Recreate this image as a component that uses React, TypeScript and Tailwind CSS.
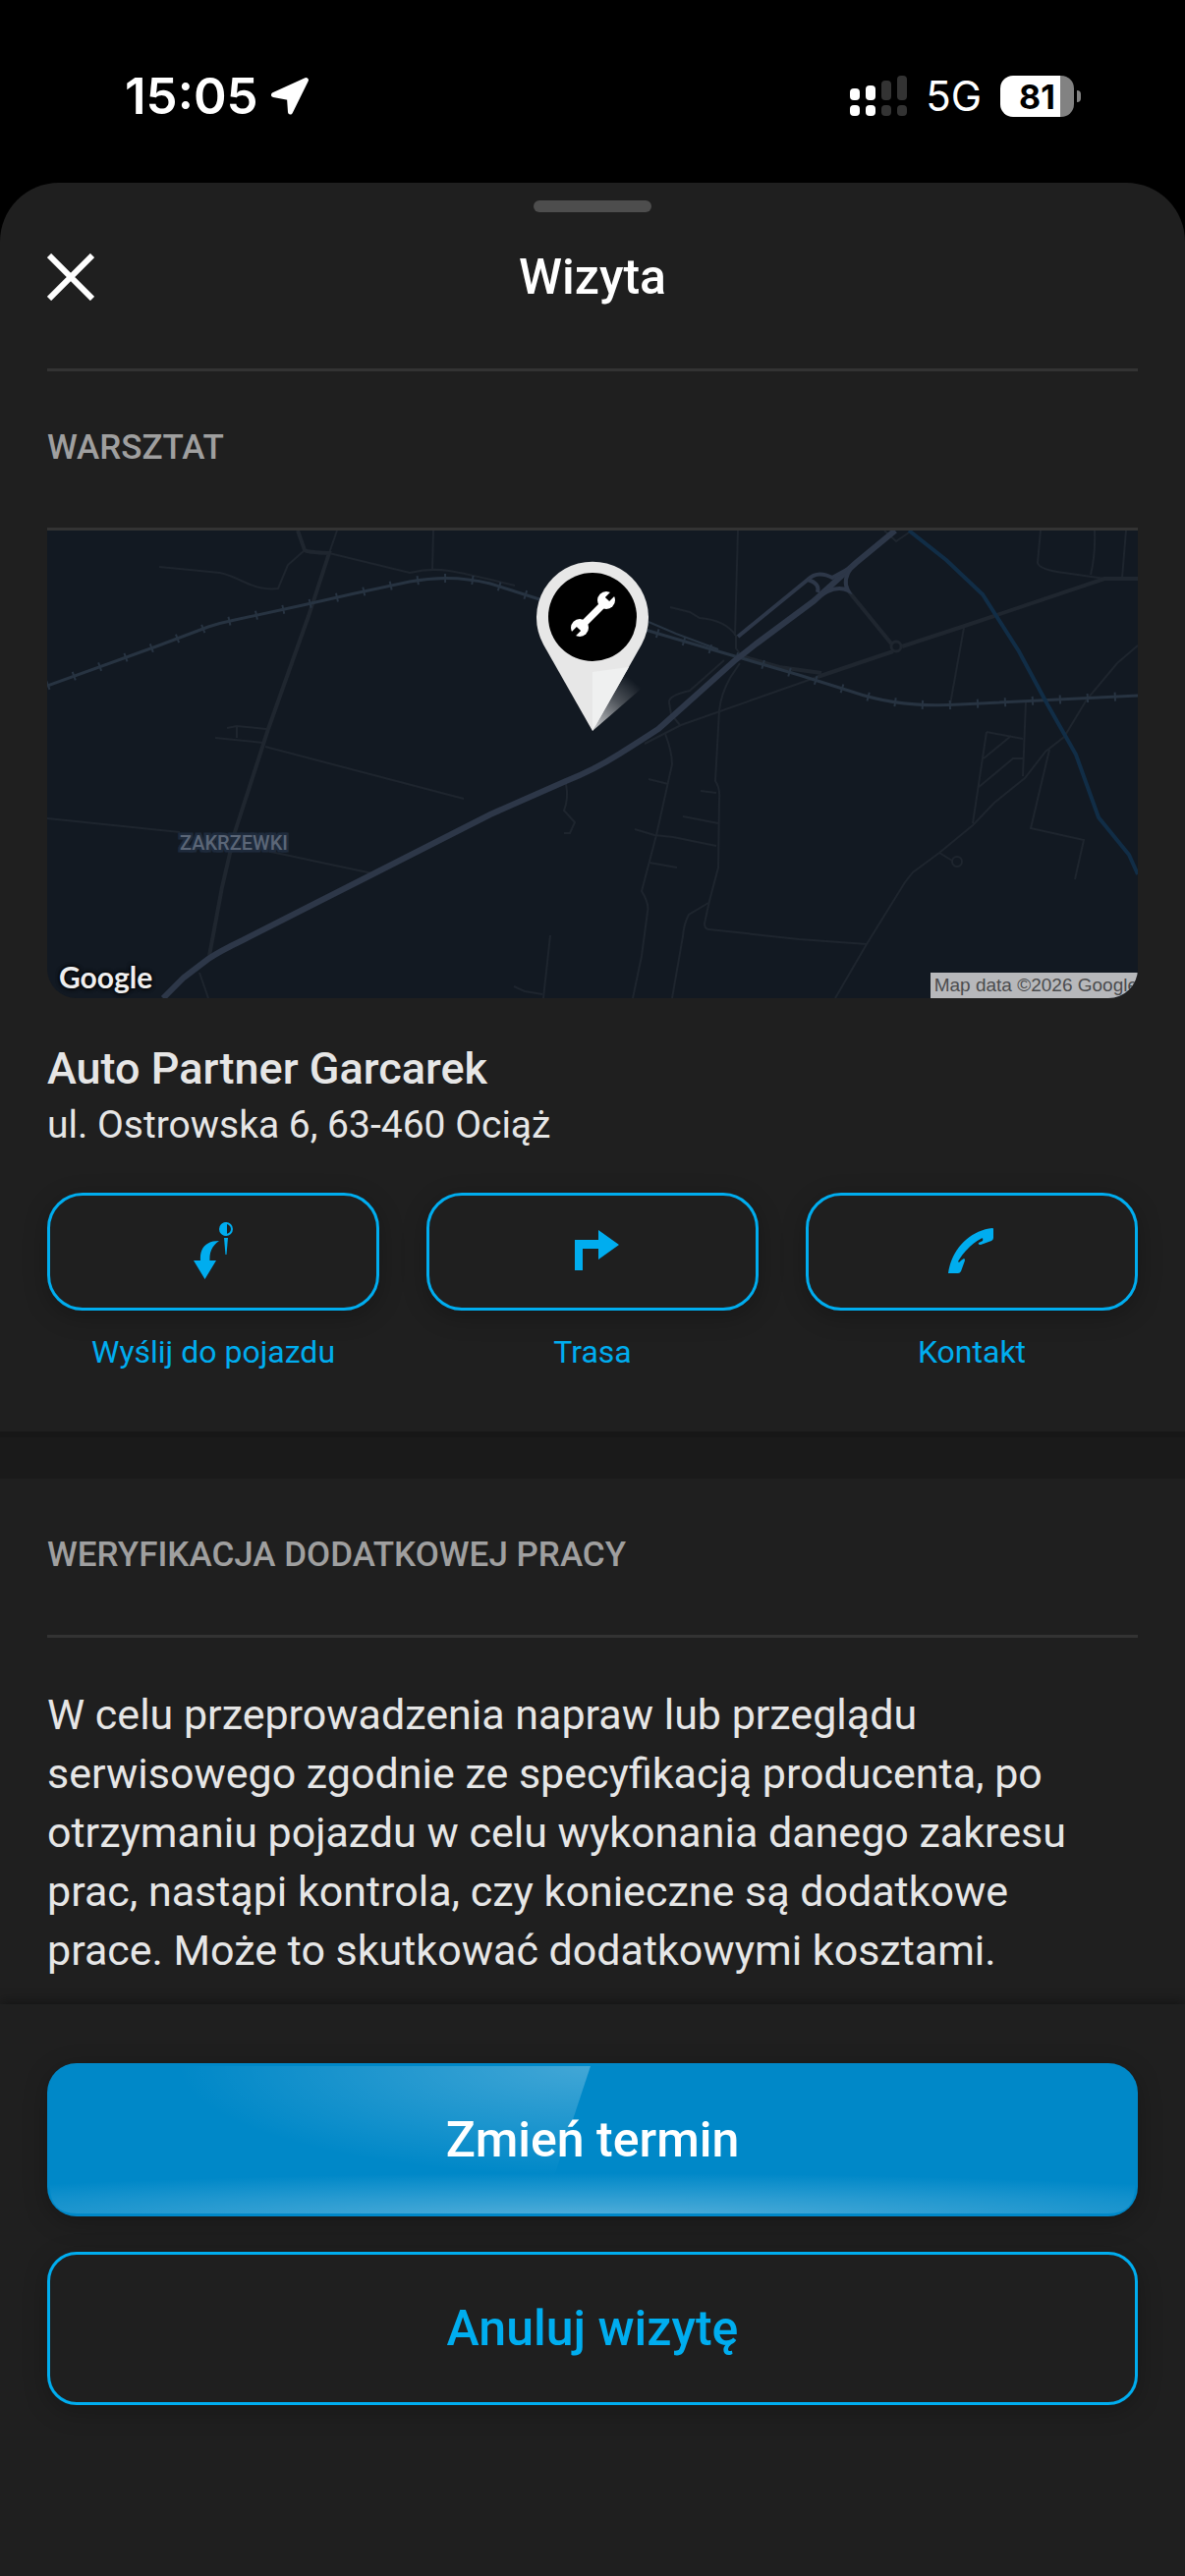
import type { ReactNode } from "react";

const ROADS = [
  "M295 0 287 23 369 43Q390 38 409 41T476 56",
  "M393 0 392 40",
  "M114 37 176 43Q185 45 202 53T235 59L245 35 262 20",
  "M183 201 193 199 223 202M193 199V211M171 211 220 216",
  "M222 220 424 273",
  "M0 293 135 307M223 326 331 349",
  "M528 258Q531 272 526 285L537 297 532 308H526",
  "M512 412 505 476M475 464 486 469 504 472",
  "M155 450 164 476",
  "M703 0 700 107",
  "M634 78 654 83 664 89Q690 91 701 107V120L707 128",
  "M689 132 654 163Q632 168 633 175L635 187 644 198",
  "M608 217 645 198 784 149",
  "M705 135 695 150Q686 166 684 183L680 255Q685 262 684 273L683 343 674 377 669 400Q669 406 674 406L765 416 834 421",
  "M629 207Q636 225 636 238L620 310 605 367Q613 380 611 388L605 433 596 476",
  "M673 379 653 391Q648 400 647 413L636 476",
  "M612 253 632 258M665 265 681 267M647 291 683 298M598 304 618 310 637 312 681 321M613 338 641 343",
  "M933 99 919 177",
  "M1011 0 1008 33Q1010 40 1035 43L1076 49M1066 0Q1067 24 1062 45M1098 0 1094 48",
  "M1110 117 1089 135 1058 172 1035 210 1016 225 995 252 964 277 942 300 908 328 881 348 873 358 834 421 802 476",
  "M956 205 942 298M956 205 993 212M981 209 953 232M993 232H983L947 262M996 175 993 250",
  "M1020 223 1001 303 1055 315 1046 355",
  "M908 328 921 336",
  "M852 0 864 11 877 2",
];

const WIDE_ROADS = [
  "M255 0 262 20Q264 22 287 23L266 87 225 202 191 307 178 363 165 433",
  "M784 149 861 123M870 118 931 98 1076 49H1110",
  "M707 128 745 139 788 145",
  "M815 61 859 115",
];

const RAILWAY =
  "M0 158 111 118 164 98Q176 94 191 91L260 76 313 64 369 52Q411 44 451 54L501 70 612 102 683 123 765 147 819 164Q868 181 929 177L1110 168";

function LocationArrow() {
  return (
    <svg viewBox="0 0 40 40" className="size-10" fill="#fff" stroke="#fff" strokeWidth="5" strokeLinejoin="round">
      <path d="M36.500 3.500 20.500 36 19.500 21.500 3.500 18.500Z" />
    </svg>
  );
}

function SignalIcon() {
  return (
    <svg viewBox="0 0 58 42" className="h-[42px] w-[58px]">
      <g fill="#fff">
        <rect x="0" y="13" width="10" height="12" rx="4" />
        <rect x="16" y="10" width="10" height="15" rx="4" />
        <rect x="0" y="30" width="10" height="11" rx="4" />
        <rect x="16" y="30" width="10" height="11" rx="4" />
      </g>
      <g fill="#333">
        <rect x="32" y="5" width="10" height="20" rx="4" />
        <rect x="48" y="0" width="10" height="25" rx="4" />
        <rect x="32" y="30" width="10" height="11" rx="4" />
        <rect x="48" y="30" width="10" height="11" rx="4" />
      </g>
    </svg>
  );
}

function StatusBar() {
  return (
    <div className="flex h-[186px] items-start justify-between pt-[68px] pr-[106px] pl-[127px] font-[Inter,sans-serif] text-white">
      <div className="flex h-[60px] items-center gap-3">
        <span className="text-[51px] leading-[60px] font-semibold">15:05</span>
        <LocationArrow />
      </div>
      <div className="flex h-[60px] items-center gap-[19px]">
        <SignalIcon />
        <span className="text-[42px] leading-[60px]">5G</span>
        <div className="flex items-center gap-[3px]">
          <div className="flex h-[42px] w-[75px] items-center justify-center rounded-[13px] bg-linear-to-r from-white from-81% to-[#828282] to-81% text-[34px] font-bold text-black">
            81
          </div>
          <div className="h-3 w-1 rounded-r-full bg-[#828282]" />
        </div>
      </div>
    </div>
  );
}

function MapPin() {
  return (
    <g>
      <defs>
        <radialGradient id="pin-glow" gradientUnits="userSpaceOnUse" cx="555" cy="204" r="66">
          <stop offset="0.1" stopColor="#fff" stopOpacity="0.7" />
          <stop offset="0.6" stopColor="#fff" stopOpacity="0.25" />
          <stop offset="1" stopColor="#fff" stopOpacity="0" />
        </radialGradient>
      </defs>
      <path d="M555 204 586 140 608 158Z" fill="url(#pin-glow)" />
      <path d="M505 116A57 57 0 1 1 605 116L555 204Z" fill="#e7e7e7" />
      <path d="M555 144 592 139 555 204Z" fill="#eff0f0" />
      <circle cx="555" cy="88" r="45" fill="#000" />
      <path d="M544 97 567 74" stroke="#fff" strokeWidth="7" />
      <circle cx="569" cy="71" r="9" fill="#fff" />
      <circle cx="542" cy="99" r="9" fill="#fff" />
      <path d="M570 70 580 60M541 100 531 110" stroke="#000" strokeWidth="6" />
    </g>
  );
}

function WorkshopMap() {
  return (
    <div className="relative overflow-hidden rounded-b-[30px] bg-[#121922]">
      <svg viewBox="0 0 1110 476" className="block h-auto w-full" fill="none" role="img" aria-label="Mapa">
        <g stroke="#1e252e" strokeWidth="2">
          {ROADS.map((d) => (
            <path key={d} d={d} />
          ))}
          <circle cx="926" cy="337" r="5" />
        </g>
        <g stroke="#1f262f" strokeWidth="4">
          {WIDE_ROADS.map((d) => (
            <path key={d} d={d} />
          ))}
          <circle cx="864" cy="118" r="5" strokeWidth="3" />
        </g>
        <path d={RAILWAY} stroke="#273341" strokeWidth="3" />
        <path d={RAILWAY} stroke="#273341" strokeWidth="9" strokeDasharray="2 26" />
        <path d="M612 93 640 105 683 121" stroke="#273341" strokeWidth="2" />
        <path
          d="M877 0 915 30 952 65 966 87 989 123 1018 177 1047 228 1070 292 1101 330 1110 350"
          stroke="#112d46"
          strokeWidth="4"
        />
        <g stroke="#2d3748">
          <path
            d="M118 476 139 455 164 436Q176 428 199 417L331 350 451 289 528 255Q556 244 583 227T622 202L699 133 722 115 780 72 823 33 863 0"
            strokeWidth="6"
          />
          <path d="M703 108 774 50Q784 40 799 48L819 37" strokeWidth="4" />
          <path d="M774 50Q787 54 784 63M780 72Q800 54 815 61Q809 50 819 37" strokeWidth="4" />
        </g>
        <text
          x="190"
          y="325"
          textAnchor="middle"
          className="fill-[#5b6677] font-[Roboto,sans-serif] text-[20px] font-medium"
          stroke="#1e2a3b"
          strokeWidth="5"
          paintOrder="stroke"
        >
          ZAKRZEWKI
        </text>
        <MapPin />
      </svg>
      <span className="absolute bottom-0 left-3 font-[Lato,sans-serif] text-[30px] leading-[44px] font-bold text-[#eee] [text-shadow:0_0_4px_#000,0_0_4px_#000]">
        Google
      </span>
      <span className="absolute right-0 bottom-0 bg-[#b7b8bb] pl-1 font-['Liberation_Sans',sans-serif] text-[19px] leading-[26px] text-[#4b4c4e]">
        Map data ©2026 Google
      </span>
    </div>
  );
}

function SendToCarIcon() {
  return (
    <svg viewBox="-3 0 80 90" className="h-[90px] w-20" fill="#00adef">
      <circle cx="50" cy="22" r="6" fill="none" stroke="#00adef" strokeWidth="2" />
      <path d="M51 15A7 7 0 0 0 51 29Z" />
      <path d="M48 31H52L50.500 48H49.500Z" />
      <path d="M43 34C29 34 23 42 24 54H17L28.500 73 40 54H33.500C33 45 36 39 43 34Z" />
    </svg>
  );
}

function RouteIcon() {
  return (
    <svg viewBox="0 0 80 90" className="h-[90px] w-20" fill="#00adef">
      <path d="M22 64V33H46V23L67 38 46 53V42H30V64Z" />
    </svg>
  );
}

function PhoneIcon() {
  return (
    <svg viewBox="0 0 80 90" className="h-[90px] w-20" fill="#00adef">
      <path d="M62 22V31Q62 33 60 34L49 38Q46 38 47 36L51 34Q52 30 49 32C41 36 31 46 26 55Q27 57 29 54L32 52Q33 52 33 54L29 65Q28 67 26 67H16C18 53 24 42 34 33C42 26 51 22 61 21Q62 21 62 22Z" />
    </svg>
  );
}

function Action({ label, icon }: { label: string; icon: ReactNode }) {
  return (
    <button className="flex flex-1 flex-col gap-5 text-[#00adef]">
      <span className="flex h-[120px] w-full items-center justify-center rounded-[36px] border-3 border-[#00adef] shadow-[0_6px_24px_rgba(0,0,0,0.25)]">
        {icon}
      </span>
      <span className="w-full text-center text-[32px] leading-[44px]">{label}</span>
    </button>
  );
}

function SectionHeader({ children }: { children: ReactNode }) {
  return (
    <h2 className="mx-12 border-b-3 border-[#333] pt-14 pb-[59px] text-[35px] leading-[44px] font-medium text-[#9f9f9f]">
      {children}
    </h2>
  );
}

export default function App() {
  return (
    <div className="flex min-h-screen flex-col bg-black font-[Roboto,sans-serif]">
      <StatusBar />
      <main className="flex flex-1 flex-col rounded-t-[60px] bg-[#1f1f1f] pt-[18px] text-[#e6e6e6]">
        <div className="mx-auto h-3 w-[120px] rounded-full bg-[#4d4d4d]" />
        <header className="mx-12 grid grid-cols-[1fr_auto_1fr] items-center border-b-3 border-[#333] pt-9 pb-[63px] text-white">
          <button aria-label="Zamknij">
            <svg viewBox="0 0 48 48" className="size-12" stroke="#fff" strokeWidth="6">
              <path d="M2 2 46 46M46 2 2 46" />
            </svg>
          </button>
          <h1 className="text-[50px] leading-[60px] font-medium">Wizyta</h1>
        </header>

        <section className="pb-[59px]">
          <SectionHeader>WARSZTAT</SectionHeader>
          <div className="px-12">
            <WorkshopMap />
            <h3 className="pt-10 text-[45px] leading-[64px] font-medium">Auto Partner Garcarek</h3>
            <p className="text-[39px] leading-[50px]">ul. Ostrowska 6, 63-460 Ociąż</p>
            <div className="flex gap-12 pt-11">
              <Action label="Wyślij do pojazdu" icon={<SendToCarIcon />} />
              <Action label="Trasa" icon={<RouteIcon />} />
              <Action label="Kontakt" icon={<PhoneIcon />} />
            </div>
          </div>
        </section>

        <div className="h-12 border-t-6 border-[#171717] bg-[#1a1a1a]" />

        <section>
          <SectionHeader>WERYFIKACJA DODATKOWEJ PRACY</SectionHeader>
          <p className="pt-12 pr-20 pb-[25px] pl-12 text-[43px] leading-[60px]">
            W celu przeprowadzenia napraw lub przeglądu serwisowego zgodnie ze specyfikacją producenta, po otrzymaniu
            pojazdu w celu wykonania danego zakresu prac, nastąpi kontrola, czy konieczne są dodatkowe prace. Może to
            skutkować dodatkowymi kosztami.
          </p>
        </section>

        <footer className="flex flex-1 flex-col gap-9 px-12 pt-[60px] pb-20 shadow-[0_-2px_12px_rgba(0,0,0,0.4)]">
          <button className="relative h-[156px] overflow-hidden rounded-[30px] bg-[#0088c8] text-[50px] font-medium text-white shadow-[0_6px_24px_rgba(0,0,0,0.25)]">
            <svg viewBox="0 0 1110 156" preserveAspectRatio="none" className="absolute inset-0 size-full">
              <defs>
                <radialGradient
                  id="sheen"
                  gradientUnits="userSpaceOnUse"
                  cx="0"
                  cy="0"
                  r="1"
                  gradientTransform="translate(553 3) scale(420 112)"
                >
                  <stop stopColor="#fff" stopOpacity="0.26" />
                  <stop offset="1" stopColor="#fff" stopOpacity="0" />
                </radialGradient>
                <radialGradient
                  id="glow"
                  gradientUnits="userSpaceOnUse"
                  cx="0"
                  cy="0"
                  r="1"
                  gradientTransform="translate(555 156) scale(840 44)"
                >
                  <stop stopColor="#fff" stopOpacity="0.32" />
                  <stop offset="1" stopColor="#fff" stopOpacity="0" />
                </radialGradient>
              </defs>
              <path d="M100 3H553L516 115H100Z" fill="url(#sheen)" />
              <path d="M3 100H1107V126Q1107 153 1080 153H30Q3 153 3 126Z" fill="url(#glow)" />
            </svg>
            <span className="relative">Zmień termin</span>
          </button>
          <button className="h-[156px] rounded-[30px] border-3 border-[#00adef] text-[50px] font-medium text-[#00adef] shadow-[0_6px_24px_rgba(0,0,0,0.25)]">
            Anuluj wizytę
          </button>
        </footer>
      </main>
    </div>
  );
}
